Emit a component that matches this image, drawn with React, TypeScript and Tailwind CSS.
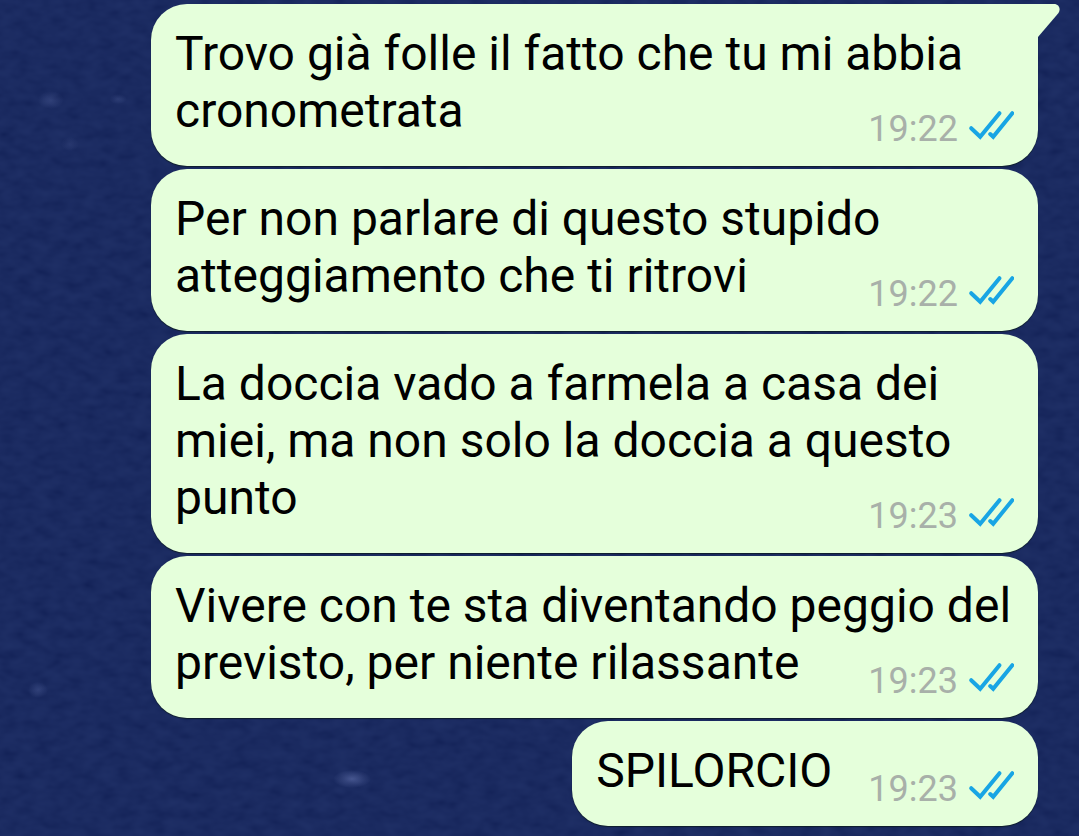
import clsx from 'clsx';

type Message = {
  id: number;
  text: string;
  time: string;
};

const messages: Message[] = [
  { id: 1, text: 'Trovo già folle il fatto che tu mi abbia cronometrata', time: '19:22' },
  { id: 2, text: 'Per non parlare di questo stupido atteggiamento che ti ritrovi', time: '19:22' },
  { id: 3, text: 'La doccia vado a farmela a casa dei miei, ma non solo la doccia a questo punto', time: '19:23' },
  { id: 4, text: 'Vivere con te sta diventando peggio del previsto, per niente rilassante', time: '19:23' },
  { id: 5, text: 'SPILORCIO', time: '19:23' },
];

// Night sky: fine grain plus a few faint stars
const Wallpaper = () => (
  <svg className="absolute inset-0 -z-10 h-full w-full" aria-hidden="true">
    <defs>
      <filter id="grain" x="0" y="0" width="100%" height="100%">
        <feTurbulence type="fractalNoise" baseFrequency="0.06 0.1" numOctaves="2" seed="7" />
        <feColorMatrix
          values="0.08 0 0 0 0.045  0.09 0 0 0 0.1  0.1 0 0 0 0.305  0 0 0 0 1"
          colorInterpolationFilters="sRGB"
        />
      </filter>
      <radialGradient id="star">
        <stop offset="0" stopColor="#6272ad" stopOpacity="0.6" />
        <stop offset="1" stopColor="#6272ad" stopOpacity="0" />
      </radialGradient>
    </defs>
    <rect width="100%" height="100%" fill="#17265c" />
    <rect width="100%" height="100%" filter="url(#grain)" />
    <ellipse cx="51" cy="100" rx="13" ry="9" fill="url(#star)" opacity="0.5" />
    <ellipse cx="118" cy="99" rx="9" ry="5" fill="url(#star)" opacity="0.4" />
    <ellipse cx="70" cy="144" rx="9" ry="7" fill="url(#star)" opacity="0.3" />
    <ellipse cx="38" cy="690" rx="10" ry="8" fill="url(#star)" opacity="0.5" />
    <ellipse cx="352" cy="779" rx="19" ry="9" fill="url(#star)" />
  </svg>
);

const ReadTicks = () => (
  <svg
    width="46"
    height="30"
    viewBox="0 0 46 30"
    fill="none"
    stroke="#18a5e4"
    strokeWidth="4"
    strokeLinecap="round"
    role="img"
    aria-label="Letto"
  >
    <path d="M3.200 18.200 L12.200 26.800 L31.500 3.200" />
    <path d="M22.200 24 L25.200 26.800 L44.300 3.200" />
  </svg>
);

const Tail = () => (
  <svg
    className="absolute top-0 left-full -ml-px"
    width="23"
    height="34"
    viewBox="0 0 23 34"
    fill="#e5ffdb"
    aria-hidden="true"
  >
    <path d="M0 0 H17 C22 0 24 5 21.500 9 L1 33 H0 Z" />
  </svg>
);

const Bubble = ({ message, first }: { message: Message; first: boolean }) => (
  <li
    className={clsx(
      'relative max-w-full rounded-[36px] bg-[#e5ffdb] px-6 pt-[21px] pb-4 shadow-[0_1px_1px_rgba(8,24,20,0.7)]',
      first && 'rounded-tr-none'
    )}
  >
    {first && <Tail />}
    <div className="flow-root text-5xl leading-[57px] text-black">
      <span>{message.text}</span>
      {/* floats beside the last line and hangs a little below it */}
      <span className="float-right ml-9 flex h-[68px] items-end gap-[10px]">
        <time className="text-4xl leading-[42px] text-[#a8b0a9]">{message.time}</time>
        <span className="flex pb-[10px]">
          <ReadTicks />
        </span>
      </span>
    </div>
  </li>
);

const App = () => {
  return (
    <main className="relative isolate min-h-screen overflow-hidden bg-[#17265c] font-['Roboto',sans-serif]">
      <Wallpaper />
      <ul className="flex flex-col items-end gap-[3px] pt-1 pr-[41px] pb-2 pl-[151px]">
        {messages.map((message, i) => (
          <Bubble key={message.id} message={message} first={i === 0} />
        ))}
      </ul>
    </main>
  );
};

export default App;
